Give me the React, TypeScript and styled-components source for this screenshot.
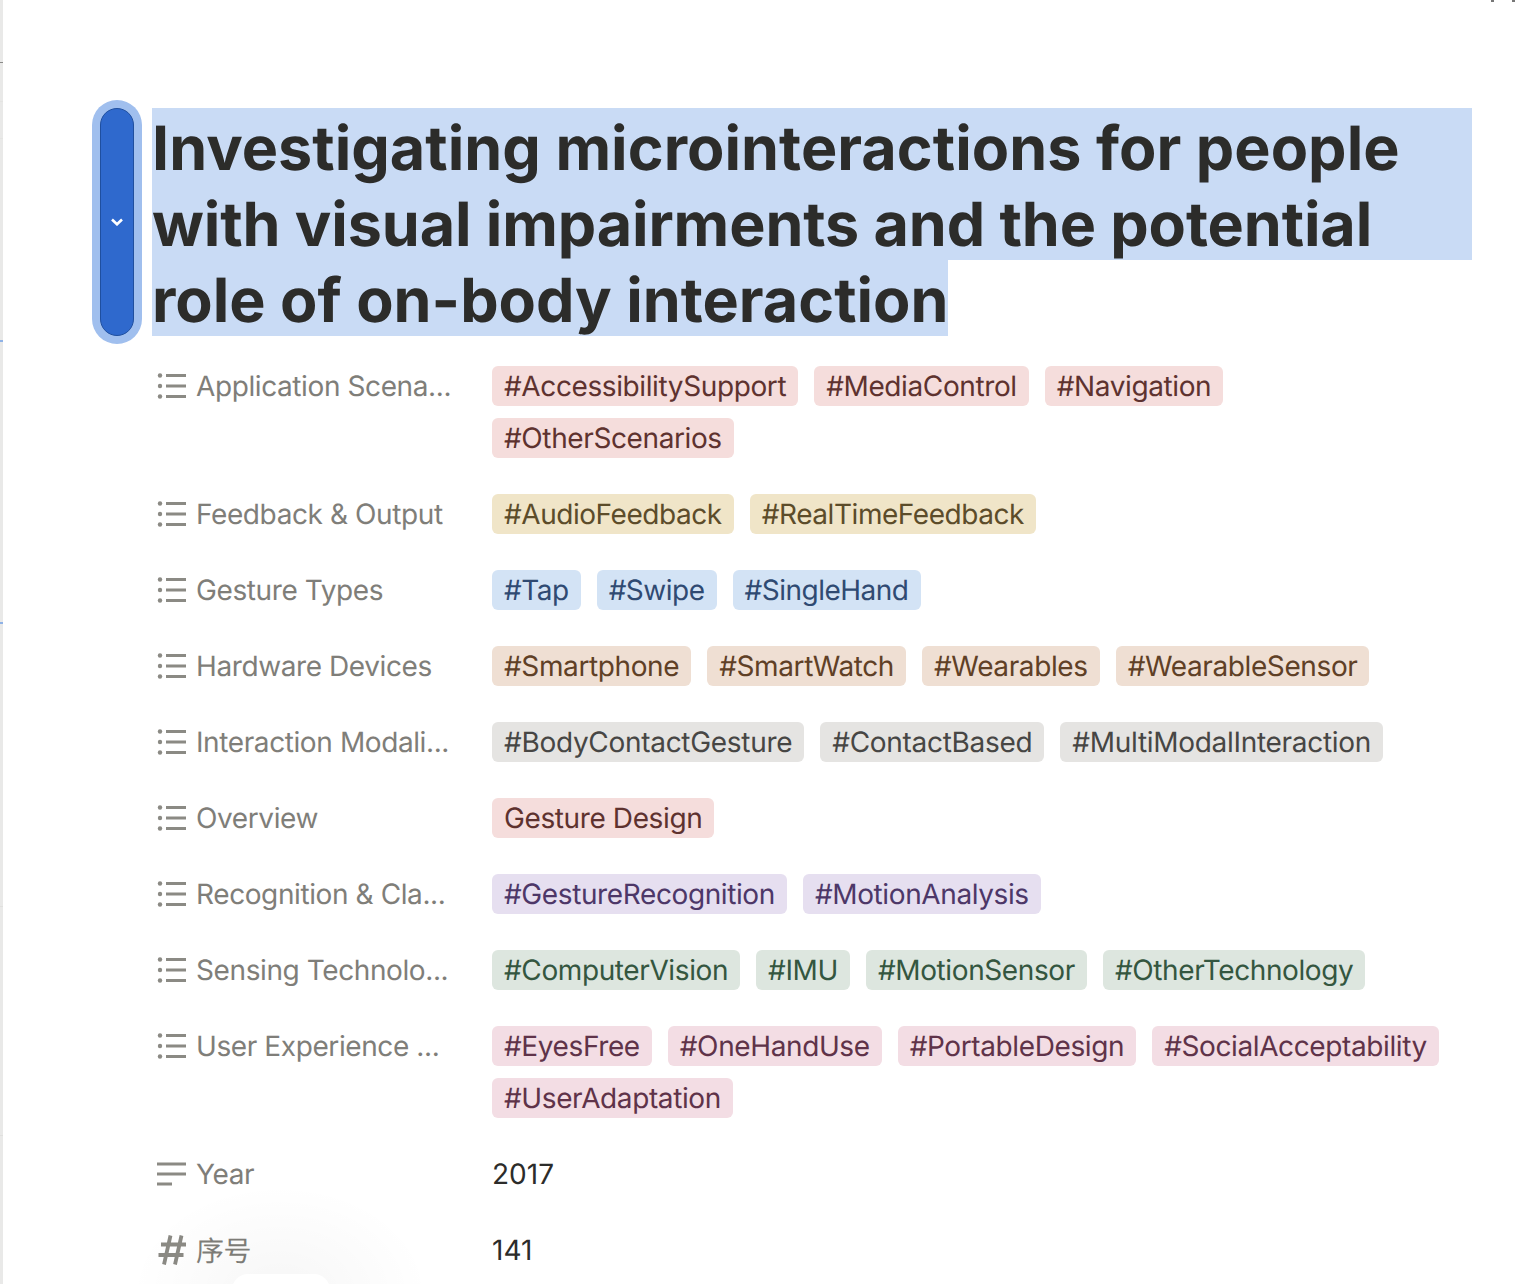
import React from "react";
import styled, { createGlobalStyle } from "styled-components";

type Tone = "red" | "yellow" | "blue" | "orange" | "gray" | "purple" | "green" | "pink";

const tones: Record<Tone, { bg: string; fg: string }> = {
  red: { bg: "#f5dddc", fg: "#5e322f" },
  yellow: { bg: "#f0e5c8", fg: "#5c4c2a" },
  blue: { bg: "#d3e3f5", fg: "#2f4a72" },
  orange: { bg: "#efdfd3", fg: "#5f4026" },
  gray: { bg: "#e5e4e2", fg: "#474644" },
  purple: { bg: "#e6dff0", fg: "#4d3768" },
  green: { bg: "#dde6df", fg: "#345640" },
  pink: { bg: "#f3dde4", fg: "#5f3349" },
};

type Row = {
  label: string;
  icon?: "list" | "text" | "hash";
  tone?: Tone;
  tags?: string[];
  value?: string;
  tracking?: number;
};

const rows: Row[] = [
  { label: "Application Scena...", tone: "red", tags: ["#AccessibilitySupport", "#MediaControl", "#Navigation", "#OtherScenarios"] },
  { label: "Feedback & Output", tone: "yellow", tracking: -0.45, tags: ["#AudioFeedback", "#RealTimeFeedback"] },
  { label: "Gesture Types", tone: "blue", tracking: -0.5, tags: ["#Tap", "#Swipe", "#SingleHand"] },
  { label: "Hardware Devices", tone: "orange", tags: ["#Smartphone", "#SmartWatch", "#Wearables", "#WearableSensor"] },
  { label: "Interaction Modali...", tone: "gray", tracking: -0.3, tags: ["#BodyContactGesture", "#ContactBased", "#MultiModalInteraction"] },
  { label: "Overview", tone: "red", tags: ["Gesture Design"] },
  { label: "Recognition & Cla...", tone: "purple", tags: ["#GestureRecognition", "#MotionAnalysis"] },
  { label: "Sensing Technolo...", tone: "green", tags: ["#ComputerVision", "#IMU", "#MotionSensor", "#OtherTechnology"] },
  { label: "User Experience ...", tone: "pink", tags: ["#EyesFree", "#OneHandUse", "#PortableDesign", "#SocialAcceptability", "#UserAdaptation"] },
  { label: "Year", icon: "text", value: "2017" },
  { label: "序号", icon: "hash", value: "141" },
];

const marks = [
  { top: 62, color: "#8a8a88", h: 1 },
  { top: 101, color: "#e4e4e2", h: 1 },
  { top: 138, color: "#e4e4e2", h: 1 },
  { top: 340, color: "#8fb2e6", h: 2 },
  { top: 622, color: "#8fb2e6", h: 2 },
  { top: 906, color: "#e0e0de", h: 1 },
  { top: 1135, color: "#e0e0de", h: 1 },
];

const PropIcon: React.FC<{ kind: Row["icon"] }> = ({ kind }) => {
  if (kind === "text") {
    return (
      <IconSvg viewBox="0 0 30 24">
        <path d="M0 2h29M0 12h29M0 22h15" stroke="#8b8a84" strokeWidth="2.8" fill="none" />
      </IconSvg>
    );
  }
  if (kind === "hash") {
    return (
      <IconSvg viewBox="0 0 30 32">
        <path d="M13.5 1.5 7 30.5M24.5 1.5 18 30.5M4 10.5h25M1.5 21h25" stroke="#8b8a84" strokeWidth="3.8" fill="none" />
      </IconSvg>
    );
  }
  return (
    <IconSvg viewBox="0 0 30 24">
      <circle cx="3" cy="1.5" r="2.2" fill="#8b8a84" />
      <circle cx="3" cy="12" r="2.2" fill="#8b8a84" />
      <circle cx="3" cy="22.5" r="2.2" fill="#8b8a84" />
      <path d="M9 1.5h20M9 12h20M9 22.5h20" stroke="#8b8a84" strokeWidth="2.8" fill="none" />
    </IconSvg>
  );
};

export default function App() {
  return (
    <>
      <GlobalStyle />
      <Page>
        <Rail>
          {marks.map((m) => (
            <RailMark key={m.top} style={{ top: m.top, height: m.h, background: m.color }} />
          ))}
        </Rail>
        <TopMark />

        <Content>
          <TitleRow>
            <DragHandle>
              <svg width="12" height="8" viewBox="0 0 12 8">
                <path d="M1 1.5 6 6.3l5-4.8" stroke="#fff" strokeWidth="2.6" fill="none" />
              </svg>
            </DragHandle>
            <Title>
              <TitleLine $fill $tracking={0.05}>Investigating microinteractions for people</TitleLine>
              <TitleLine $fill $tracking={-0.1}>with visual impairments and the potential</TitleLine>
              <TitleLine>role of on-body interaction</TitleLine>
            </Title>
          </TitleRow>

          <Props>
            {rows.map((row) => (
              <PropRow key={row.label}>
                <PropLabel>
                  <IconSlot>
                    <PropIcon kind={row.icon} />
                  </IconSlot>
                  <LabelText>{row.label}</LabelText>
                </PropLabel>
                {row.tags ? (
                  <TagList>
                    {row.tags.map((t) => (
                      <Tag key={t} $tone={row.tone ?? "gray"} $tracking={row.tracking ?? -0.39}>
                        {t}
                      </Tag>
                    ))}
                  </TagList>
                ) : (
                  <PlainValue>{row.value}</PlainValue>
                )}
              </PropRow>
            ))}
          </Props>
        </Content>

        <BottomGlow />
        <BottomPill />
      </Page>
    </>
  );
}

const GlobalStyle = createGlobalStyle`
  html, body {
    margin: 0;
    background: #fff;
  }
  body {
    font-family: Inter, "Noto Sans CJK SC", sans-serif;
    text-rendering: geometricPrecision;
  }
`;

const Page = styled.div`
  position: relative;
  width: 1520px;
  height: 1284px;
  overflow: hidden;
  background: #fff;
`;

const Rail = styled.div`
  position: absolute;
  left: 0;
  top: 0;
  bottom: 0;
  width: 3px;
  background: #e9e9e8;
`;

const RailMark = styled.div`
  position: absolute;
  left: 0;
  width: 3px;
`;

const TopMark = styled.div`
  position: absolute;
  top: 0;
  left: 1491px;
  width: 24px;
  height: 2px;
  background: linear-gradient(90deg, #777 0 3px, transparent 3px 21px, #777 21px 24px);
`;

const Content = styled.div`
  display: flex;
  flex-direction: column;
  padding: 108px 48px 0 100px;
`;

const TitleRow = styled.div`
  display: flex;
  gap: 18px;
  align-items: stretch;
`;

const DragHandle = styled.div`
  flex: none;
  width: 34px;
  box-sizing: border-box;
  display: flex;
  align-items: center;
  justify-content: center;
  background: #2f69cd;
  border: 1px solid #1f4f9f;
  border-radius: 17px;
  box-shadow: 0 0 0 8px #a0bfee;
`;

const Title = styled.h1`
  flex: 1;
  margin: 0;
  font-size: 61px;
  line-height: 80px;
  font-weight: 700;
  color: #2c2c2a;
`;

const TitleLine = styled.div<{ $fill?: boolean; $tracking?: number }>`
  height: 76px;
  background: #c9dbf5;
  white-space: nowrap;
  letter-spacing: ${(p) => p.$tracking ?? 0}px;
  width: ${(p) => (p.$fill ? "auto" : "fit-content")};
`;

const Props = styled.div`
  display: flex;
  flex-direction: column;
  gap: 36px;
  margin-top: 30px;
  padding-left: 57px;
`;

const PropRow = styled.div`
  display: flex;
  align-items: flex-start;
`;

const PropLabel = styled.div`
  flex: none;
  width: 335px;
  height: 40px;
  display: flex;
  align-items: center;
  gap: 9px;
  white-space: nowrap;
`;

const LabelText = styled.span`
  font-size: 28px;
  letter-spacing: -0.4px;
  color: #7f7e79;
`;

const IconSlot = styled.span`
  flex: none;
  width: 30px;
  display: flex;
  align-items: center;
`;

const IconSvg = styled.svg`
  display: block;
  width: 30px;
  height: auto;
  overflow: visible;
`;

const TagList = styled.div`
  flex: 1;
  display: flex;
  flex-wrap: wrap;
  gap: 12px 16px;
`;

const Tag = styled.span<{ $tone: Tone; $tracking: number }>`
  height: 40px;
  padding: 0 12px;
  display: inline-flex;
  align-items: center;
  border-radius: 6px;
  font-size: 28px;
  letter-spacing: ${(p) => p.$tracking}px;
  white-space: nowrap;
  background: ${(p) => tones[p.$tone].bg};
  color: ${(p) => tones[p.$tone].fg};
`;

const PlainValue = styled.div`
  height: 40px;
  display: flex;
  align-items: center;
  font-size: 28px;
  color: #2c2c2a;
`;

const BottomGlow = styled.div`
  position: absolute;
  left: 130px;
  bottom: -120px;
  width: 300px;
  height: 220px;
  border-radius: 50%;
  background: radial-gradient(closest-side, rgba(0, 0, 0, 0.035), rgba(0, 0, 0, 0));
`;

const BottomPill = styled.div`
  position: absolute;
  left: 232px;
  top: 1274px;
  width: 98px;
  height: 40px;
  border-radius: 16px;
  background: #fff;
`;
